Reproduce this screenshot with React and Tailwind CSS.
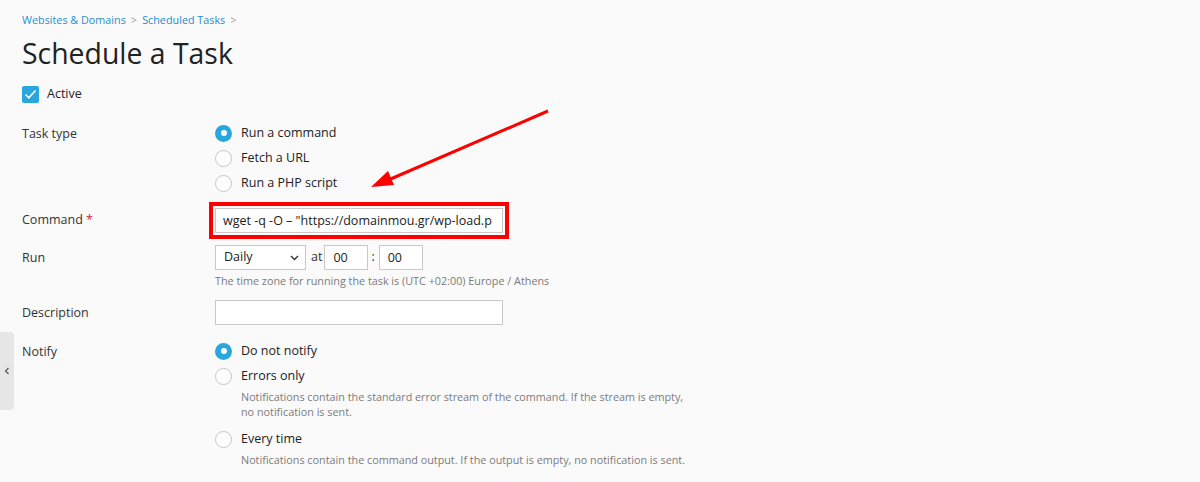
import React from 'react';

const font = { fontFamily: '"Open Sans", "Noto Sans", sans-serif' };

// Radio circle, blue with a white dot when checked
const Radio = ({ checked, label }) => (
  <div className="flex items-center h-[25px]">
    {checked ? (
      <span className="w-[17px] h-[17px] rounded-full bg-[#28a6de] flex items-center justify-center">
        <span className="w-[6px] h-[6px] rounded-full bg-white" />
      </span>
    ) : (
      <span className="w-[17px] h-[17px] rounded-full bg-white border border-[#c4c4c4]" />
    )}
    <span className="ml-[9px] text-[12.5px] text-[#222]">{label}</span>
  </div>
);

const Hint = ({ children }) => (
  <p className="ml-[26px] text-[10.8px] leading-[15px] text-[#7a7a7a]">{children}</p>
);

const Row = ({ label, required, className, children }) => (
  <div className={`flex ${className || ''}`}>
    <div className="w-[193px] shrink-0 text-[12.5px] text-[#333] leading-[25px]">
      {label}
      {required && <span className="text-[#d9263d]"> *</span>}
    </div>
    <div className="flex-1">{children}</div>
  </div>
);

const App = () => {
  return (
    <div className="relative w-[1200px] h-[482px] overflow-hidden bg-[#fafafa]" style={font}>
      <div className="pl-[22px] pt-[12px]">
        <div className="flex items-center text-[10.8px] leading-[16px] text-[#2a8dcb]">
          <span>Websites &amp; Domains</span>
          <span className="mx-[5px] text-[#a0a0a0] text-[11px]">&gt;</span>
          <span>Scheduled Tasks</span>
          <span className="ml-[5px] text-[#a0a0a0] text-[11px]">&gt;</span>
        </div>
        <h1 className="mt-[7px] text-[28.4px] leading-[36px] text-[#222]">Schedule a Task</h1>

        <div className="mt-[14px] flex items-center">
          <span className="w-[17px] h-[17px] rounded-[2px] bg-[#28a6de] flex items-center justify-center">
            <svg width="13" height="11" viewBox="0 0 13 11" fill="none">
              <path d="M1.5 5.5 L4.8 8.8 L11.5 1.5" stroke="white" strokeWidth="1.7" />
            </svg>
          </span>
          <span className="ml-[8px] text-[12.5px] text-[#222]">Active</span>
        </div>

        <Row label="Task type" className="mt-[17px]">
          <Radio checked label="Run a command" />
          <Radio label="Fetch a URL" />
          <Radio label="Run a PHP script" />
        </Row>

        <Row label="Command" required className="mt-[11px] items-center">
          <input
            readOnly
            value={'wget -q -O – "https://domainmou.gr/wp-load.p'}
            className="w-[288px] h-[25px] px-[7px] bg-white border border-[#c8c8c8] text-[12.5px] text-[#222] outline-4 outline-solid outline-[#ff0000] outline-offset-2"
            style={font}
          />
        </Row>

        <Row label="Run" className="mt-[12px]">
          <div className="flex items-center">
            <div className="relative w-[91px] h-[25px] bg-white border border-[#c8c8c8] flex items-center px-[8px] text-[12.5px] text-[#222]">
              Daily
              <svg className="absolute right-[6px] top-[9px]" width="9" height="6" viewBox="0 0 9 6" fill="none">
                <path d="M1 1 L4.5 4.5 L8 1" stroke="#333" strokeWidth="1.4" />
              </svg>
            </div>
            <span className="ml-[5px] mr-[2px] text-[12.5px] text-[#333]">at</span>
            <div className="w-[44px] h-[25px] bg-white border border-[#c8c8c8] px-[8px] text-[12.5px] leading-[23px] text-[#222]">00</div>
            <span className="ml-[3px] mr-[4px] text-[12.5px] text-[#333]">:</span>
            <div className="w-[44px] h-[25px] bg-white border border-[#c8c8c8] px-[8px] text-[12.5px] leading-[23px] text-[#222]">00</div>
          </div>
          <p className="mt-[3px] text-[10.8px] leading-[15px] text-[#7a7a7a]">
            The time zone for running the task is (UTC +02:00) Europe / Athens
          </p>
        </Row>

        <Row label="Description" className="mt-[12px]">
          <div className="w-[288px] h-[25px] bg-white border border-[#c8c8c8]" />
        </Row>

        <Row label="Notify" className="mt-[14px]">
          <Radio checked label="Do not notify" />
          <Radio label="Errors only" />
          <Hint>
            Notifications contain the standard error stream of the command. If the stream is empty,
            <br />
            no notification is sent.
          </Hint>
          <div className="mt-[8px]">
            <Radio label="Every time" />
          </div>
          <Hint>Notifications contain the command output. If the output is empty, no notification is sent.</Hint>
        </Row>
      </div>

      {/* annotation arrow */}
      <svg className="absolute left-0 top-0 pointer-events-none" width="1200" height="482">
        <line x1="548" y1="111" x2="386" y2="181" stroke="#ff0000" strokeWidth="3" />
        <polygon points="371,187 388,171 394,185" fill="#ff0000" />
      </svg>

      {/* sidebar toggle */}
      <div className="absolute left-0 top-[332px] w-[14px] h-[78px] bg-[#e6e6e6] rounded-r-[4px] flex items-center justify-center">
        <svg width="6" height="8" viewBox="0 0 6 8" fill="none">
          <path d="M4.5 1 L1.5 4 L4.5 7" stroke="#555" strokeWidth="1.2" />
        </svg>
      </div>
    </div>
  );
};

export default App;
